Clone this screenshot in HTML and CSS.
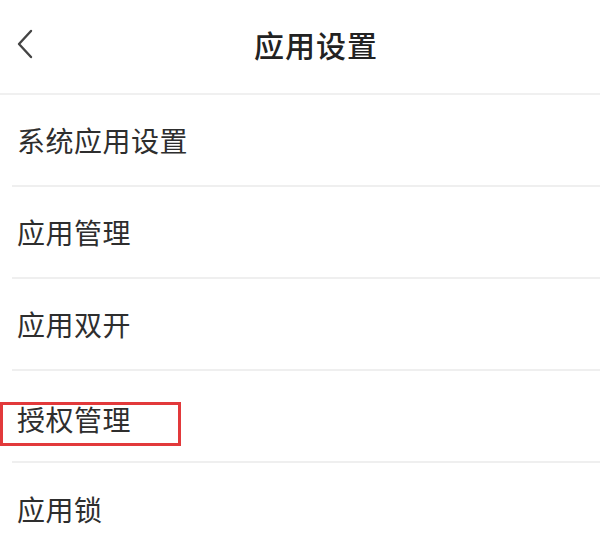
FILE: index.html
```html
<!DOCTYPE html>
<html lang="zh-CN">
<head>
<meta charset="utf-8">
<title>应用设置</title>
<link rel="stylesheet" href="styles.css">
</head>
<body>
<div class="page">
  <header class="topbar">
    <span class="back" aria-label="返回">
      <svg width="18" height="30" viewBox="0 0 18 30"><path d="M15 2 L3 15 L15 28" fill="none" stroke="#444" stroke-width="2.4" stroke-linecap="round" stroke-linejoin="round"/></svg>
    </span>
    <h1 class="title">应用设置</h1>
  </header>
  <ul class="list">
    <li class="row">系统应用设置</li>
    <li class="row">应用管理</li>
    <li class="row">应用双开</li>
    <li class="row marked"><span class="label">授权管理</span></li>
    <li class="row last">应用锁</li>
  </ul>
</div>
</body>
</html>
```
FILE: styles.css
```css
* { box-sizing: border-box; }
html, body {
  margin: 0;
  padding: 0;
  background: #ffffff;
}
body {
  font-family: "Noto Sans CJK SC", "Noto Sans", sans-serif;
  color: #2a2a2a;
}
.page {
  width: 600px;
  height: 548px;
  overflow: hidden;
}
.topbar {
  height: 95px;
  display: flex;
  align-items: center;
  border-bottom: 2px solid #f0f0f0;
  padding-left: 16px;
  padding-bottom: 6px;
}
.back {
  display: flex;
  width: 18px;
  height: 30px;
}
.title {
  margin: 0 0 0 220px;
  font-size: 30px;
  font-weight: 500;
  color: #222;
  letter-spacing: 1px;
}
.list {
  list-style: none;
  margin: 0;
  padding: 0 0 0 12px;
}
.row {
  position: relative;
  height: 92px;
  display: flex;
  align-items: center;
  padding-left: 5px;
  font-size: 28px;
  color: #2e2e2e;
  border-bottom: 2px solid #efefef;
  letter-spacing: 0.5px;
}
.row.last { border-bottom: none; }
.marked { align-items: flex-start; padding-top: 28px; }
.marked::after {
  content: "";
  position: absolute;
  left: -12px;
  top: 31px;
  width: 175px;
  height: 38px;
  border: 3px solid #e2393b;
}
```
